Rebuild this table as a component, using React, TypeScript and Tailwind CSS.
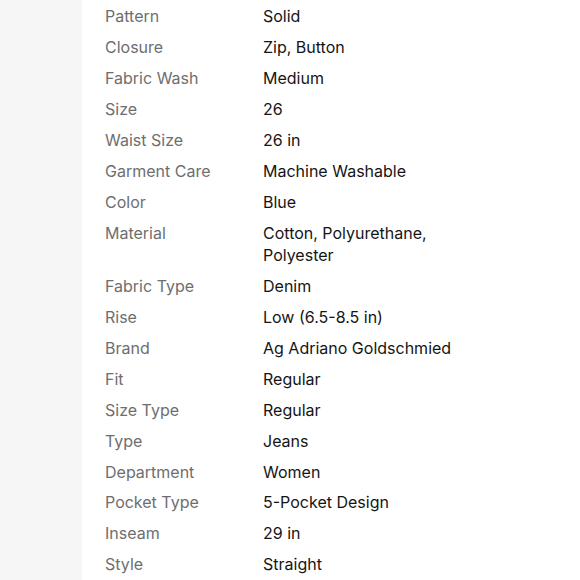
import React from 'react';

const specs: [string, string][] = [
  ['Pattern', 'Solid'],
  ['Closure', 'Zip, Button'],
  ['Fabric Wash', 'Medium'],
  ['Size', '26'],
  ['Waist Size', '26 in'],
  ['Garment Care', 'Machine Washable'],
  ['Color', 'Blue'],
  ['Material', 'Cotton, Polyurethane, Polyester'],
  ['Fabric Type', 'Denim'],
  ['Rise', 'Low (6.5-8.5 in)'],
  ['Brand', 'Ag Adriano Goldschmied'],
  ['Fit', 'Regular'],
  ['Size Type', 'Regular'],
  ['Type', 'Jeans'],
  ['Department', 'Women'],
  ['Pocket Type', '5-Pocket Design'],
  ['Inseam', '29 in'],
  ['Style', 'Straight'],
];

const App = () => {
  return (
    <div className="flex h-[580px] w-[580px] overflow-hidden bg-white font-['Inter',sans-serif] text-[16px] leading-[22px]">
      {/* grey margin on the left */}
      <div className="w-[82px] shrink-0 bg-[#f6f6f6]" />

      <div className="flex flex-1 flex-col gap-[8.96px] pl-[23px] pt-[5.2px]">
        {specs.map(([label, value]) => (
          <div key={label} className="flex">
            <div className="w-[158px] shrink-0 text-[#6e6e6e]">{label}</div>
            <div className="w-[200px] text-[#151515]">{value}</div>
          </div>
        ))}
      </div>
    </div>
  );
};

export default App;
